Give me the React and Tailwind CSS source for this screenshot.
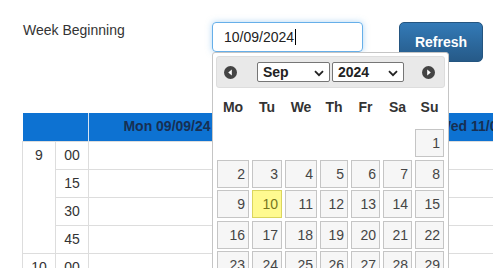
import React from 'react'

const font = { fontFamily: '"Liberation Sans", Arial, sans-serif' }

function CircleArrow({ dir }) {
  return (
    <svg width="13" height="13" viewBox="0 0 13 13">
      <circle cx="6.5" cy="6.5" r="6.5" fill="#444444" />
      {dir === 'left' ? (
        <path d="M4.2 6.5 L7.8 3.6 L7.8 9.4 Z" fill="#fff" />
      ) : (
        <path d="M8.8 6.5 L5.2 3.6 L5.2 9.4 Z" fill="#fff" />
      )}
    </svg>
  )
}

function Chevron() {
  return (
    <svg width="10" height="7" viewBox="0 0 10 7" className="absolute right-[5px] top-[7px]">
      <path d="M1 1.2 L5 5.2 L9 1.2" fill="none" stroke="#222" strokeWidth="1.8" />
    </svg>
  )
}

function Select({ value, width }) {
  return (
    <div
      className={`relative h-[20px] border border-[#767676] rounded-[2px] bg-white text-[14px] font-bold text-[#222] leading-[18px] pl-[5px] ${width}`}
    >
      {value}
      <Chevron />
    </div>
  )
}

const weeks = [
  [null, null, null, null, null, null, 1],
  [2, 3, 4, 5, 6, 7, 8],
  [9, 10, 11, 12, 13, 14, 15],
  [16, 17, 18, 19, 20, 21, 22],
  [23, 24, 25, 26, 27, 28, 29],
  [30, null, null, null, null, null, null],
]

const cols = 'grid grid-cols-[32px_30px_32px_28px_29px_29px_29px] gap-x-[3px]'

function DatePicker() {
  return (
    <div className="absolute left-[212px] top-[52px] w-[237px] h-[260px] bg-white border border-[#c5c5c5] rounded-[3px] p-[3px]">
      <div className="flex items-center h-[32px] bg-[#e9e9e9] border border-[#dddddd] rounded-[3px] pl-[7px] pr-[9px]">
        <CircleArrow dir="left" />
        <div className="ml-[20px]">
          <Select value="Sep" width="w-[73px]" />
        </div>
        <div className="ml-[2px]">
          <Select value="2024" width="w-[72px]" />
        </div>
        <div className="ml-auto">
          <CircleArrow dir="right" />
        </div>
      </div>
      <div className={`${cols} ml-[1px] h-[38px] items-center text-[14px] font-bold text-[#333]`}>
        {['Mo', 'Tu', 'We', 'Th', 'Fr', 'Sa', 'Su'].map((d) => (
          <div key={d} className="text-center">
            {d}
          </div>
        ))}
      </div>
      <div className={`${cols} gap-y-[2.5px] ml-[1px] mt-[3px]`}>
        {weeks.flat().map((d, i) =>
          d === null ? (
            <div key={i} className="h-[28px]" />
          ) : (
            <div
              key={i}
              className={`h-[28px] border text-right pr-[3px] text-[14px] leading-[26px] ${
                d === 10
                  ? 'bg-[#fffa90] border-[#dad55e] text-[#777620]'
                  : 'bg-[#f6f6f6] border-[#c5c5c5] text-[#454545]'
              }`}
            >
              {d}
            </div>
          )
        )}
      </div>
    </div>
  )
}

const slots = [
  ['9', '00'],
  [null, '15'],
  [null, '30'],
  [null, '45'],
  ['10', '00'],
  [null, '15'],
]

export default function App() {
  return (
    <div className="relative w-[493px] h-[268px] overflow-hidden bg-white text-[#333]" style={font}>
      <div className="flex items-start pt-[22px]">
        <div className="w-[212px] shrink-0 pl-[23px] text-[14px] leading-[16px]">Week Beginning</div>
        <div className="w-[151px] shrink-0 h-[30px] border border-[#66afe9] rounded-[4px] shadow-[0_0_6px_rgba(102,175,233,0.5)] flex items-center pl-[11px] text-[14px] text-[#222]">
          10/09/2024
          <span className="inline-block w-[1px] h-[16px] bg-black ml-[1px]" />
        </div>
        <button className="ml-[36px] shrink-0 w-[84px] h-[40px] rounded-[5px] border border-[#245580] bg-gradient-to-b from-[#337ab7] to-[#265a88] text-white font-bold text-[14px]">
          Refresh
        </button>
      </div>

      <table className="mt-[51px] ml-[22px] border-collapse table-fixed w-[537px] text-[14px] leading-[27px]">
        <colgroup>
          <col className="w-[33px]" />
          <col className="w-[33px]" />
          <col className="w-[157px]" />
          <col className="w-[157px]" />
          <col className="w-[157px]" />
        </colgroup>
        <thead>
          <tr className="h-[28px] bg-[#0d72d2] text-[#172f52] font-bold">
            <th colSpan={2} className="border-r border-[#d6e4f3]" />
            <th className="border-r border-[#d6e4f3] text-center">Mon 09/09/24</th>
            <th className="border-r border-[#d6e4f3] text-center">Tue 10/09/24</th>
            <th className="text-center">Wed 11/09/24</th>
          </tr>
        </thead>
        <tbody>
          {slots.map(([h, m], i) => (
            <tr key={i} className="h-[28px]">
              {h && (
                <td rowSpan={4} className="align-top text-center border border-[#dddddd]">
                  {h}
                </td>
              )}
              <td className="text-center border border-[#dddddd]">{m}</td>
              <td className="border border-[#dddddd]" />
              <td className="border border-[#dddddd]" />
              <td className="border border-[#dddddd]" />
            </tr>
          ))}
        </tbody>
      </table>

      <DatePicker />
    </div>
  )
}
